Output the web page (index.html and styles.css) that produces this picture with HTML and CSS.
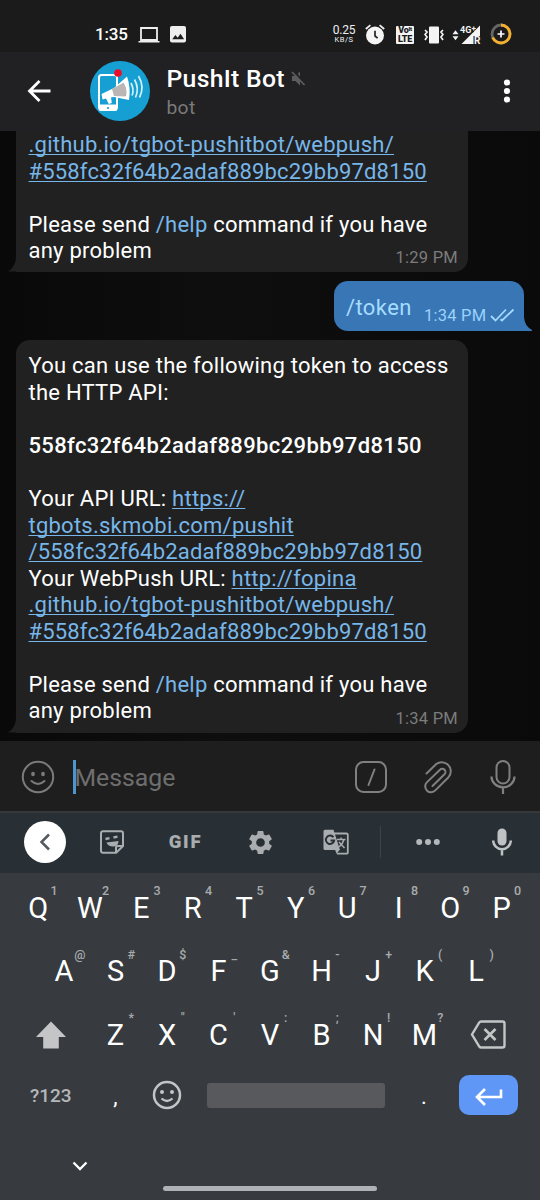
FILE: index.html
```html
<!DOCTYPE html>
<html lang="en">
<head>
<meta charset="utf-8">
<title>PushIt Bot</title>
<link rel="stylesheet" href="styles.css">
</head>
<body>
<div class="phone">
  <div class="status">
    <span class="clock">1:35</span>
    <svg class="laptop" width="22" height="18" viewBox="0 0 22 18"><path d="M3 2h16v12H3z" fill="none" stroke="#eee" stroke-width="1.8"/><path d="M.5 15h21v1.600H.5zM8 14h6v1.500H8z" fill="#eee"/></svg>
    <svg class="photo" width="16" height="17" viewBox="0 0 16 17"><rect width="16" height="16.500" rx="2" fill="#eee"/><path d="M2.200 13.300l3.200-4.200 2.300 2.600 2.800-3.900 3.600 5.500z" fill="#1c1c1c"/></svg>
    <div class="speed"><span class="speed-num">0.25</span><span class="speed-unit">KB/S</span></div>
    <svg class="alarm" width="20" height="21" viewBox="0 0 20 21"><circle cx="10" cy="11.500" r="9" fill="#f4f4f4"/><path d="M10 6.800v5.200l2.600 2.200" fill="none" stroke="#222" stroke-width="1.700"/><path d="M.8 5L5.400 1.200M19.200 5L14.600 1.200" stroke="#f4f4f4" stroke-width="1.700"/></svg>
    <div class="volte"><span>Vo<small>lt</small></span><span>LTE</span></div>
    <svg class="vibrate" width="20" height="18" viewBox="0 0 20 18"><rect x="5" y=".5" width="10" height="17" rx="1" fill="#f4f4f4"/><path d="M1 4l2 2-2 2.500 2 2.500-2 3M19 4l-2 2 2 2.500-2 2.500 2 3" fill="none" stroke="#f4f4f4" stroke-width="1.700"/></svg>
    <svg class="signal" width="30" height="22" viewBox="0 0 30 22"><path d="M.5 10.200l3-4 3 4zM.5 12.200l3 4 3-4z" fill="#f4f4f4"/><path d="M9.500 20L28 1.500V12h-6.500v8z" fill="#f4f4f4"/><path d="M8 1h10l4 2v5l-6 1.500H8z" fill="#1b1b1b"/><text x="8" y="8.600" class="net">4G</text><text x="19.500" y="6.500" class="plus">+</text><text x="22" y="20.300" class="roam">R</text></svg>
    <svg class="battery" width="22" height="22" viewBox="0 0 22 22"><circle cx="11" cy="11" r="9" fill="none" stroke="#666" stroke-width="2.800"/><path d="M11 2a9 9 0 1 1-8.300 12.500" fill="none" stroke="#f5b02b" stroke-width="2.800"/><path d="M11 7.500v7M7.500 11h7" stroke="#fff" stroke-width="1.700"/></svg>
  </div>

  <div class="header">
    <svg class="back" width="24" height="22" viewBox="0 0 24 22"><path d="M12.500 1L2.500 11l10 10M2.500 11h21" fill="none" stroke="#fff" stroke-width="2.800"/></svg>
    <svg class="avatar" width="60" height="60" viewBox="0 0 60 60">
      <circle cx="30" cy="30" r="30" fill="#159fd2"/>
      <rect x="9" y="14" width="18" height="34" rx="2.500" fill="none" stroke="#fff" stroke-width="2"/>
      <path d="M8.500 43.500h19V48a2 2 0 0 1-2 2h-15a2 2 0 0 1-2-2z" fill="#fff"/><circle cx="18" cy="47" r="1.100" fill="#159fd2"/>
      <path d="M11.500 33L24 27 37 15.500q4 11 2 23.500L24 36l-3 .5.800 5.500-3 1-2.800-5.500-3.500 1z" fill="#fff"/>
      <path d="M22 28l11-6q3.500 6 2.500 13.500L24 35z" fill="#bbb5b5"/><path d="M33 22q4 5 2.500 13" stroke="#aaa" fill="none"/>
      <path d="M41 22q3.500 7 1 12.500M44.500 18.500q5 9 1 18M48.500 15q6.500 11 1 21.500" stroke="#d5f1fb" stroke-width="1.700" fill="none"/>
      <circle cx="28" cy="12" r="3.800" fill="#f00b27"/>
    </svg>
    <div class="who"><div class="name">PushIt Bot<svg width="15" height="17" viewBox="0 0 15 17"><path d="M1 6h3.500L9 1.500v14L4.500 11H1z" fill="#5c5c5c"/><path d="M2.500 1L14.500 14" stroke="#212123" stroke-width="2"/><path d="M1 2L13.500 15" stroke="#5c5c5c" stroke-width="1.800"/></svg></div><div class="sub">bot</div></div>
    <svg class="more" width="8" height="24" viewBox="0 0 8 24"><g fill="#fff"><circle cx="4" cy="3.500" r="3.100"/><circle cx="4" cy="12" r="3.100"/><circle cx="4" cy="20.500" r="3.100"/></g></svg>
  </div>

  <div class="chat">
    <div class="bubble in">
      <a>.github.io/tgbot-pushitbot/webpush/</a><br><a class="hash">#558fc32f64b2adaf889bc29bb97d8150</a><br><br>Please send <i>/help</i> command if you have<br>any problem
      <span class="time">1:29 PM</span>
      <svg class="tail" width="16" height="18" viewBox="0 0 16 18"><path d="M8 0v2Q8 13 0 17.500h16V0z" fill="#212121"/></svg>
    </div>
    <div class="bubble out">
      <span class="cmd">/token</span><span class="sent">1:34 PM</span>
      <svg class="checks" width="25" height="14" viewBox="0 0 25 14"><path d="M1 8l4.500 4.500L16 1.500M10.500 11.200l1.500 1.300L23.500 1.500" fill="none" stroke="#a5d8ff" stroke-width="1.800"/></svg>
      <svg class="tail" width="16" height="18" viewBox="0 0 16 18"><path d="M8 0v4Q8.500 13 16 17v1H0V0z" fill="#3876b5"/></svg>
    </div>
    <div class="bubble in">
      You can use the following token to access<br>the HTTP API:<br><br><b>558fc32f64b2adaf889bc29bb97d8150</b><br><br>Your API URL: <a>https://</a><br><a>tgbots.skmobi.com/pushit</a><br><a class="hash">/558fc32f64b2adaf889bc29bb97d8150</a><br>Your WebPush URL: <a>http://fopina</a><br><a>.github.io/tgbot-pushitbot/webpush/</a><br><a class="hash">#558fc32f64b2adaf889bc29bb97d8150</a><br><br>Please send <i>/help</i> command if you have<br>any problem
      <span class="time">1:34 PM</span>
      <svg class="tail" width="16" height="18" viewBox="0 0 16 18"><path d="M8 0v2Q8 13 0 17.500h16V0z" fill="#212121"/></svg>
    </div>
  </div>

  <div class="composer">
    <svg class="smile" width="34" height="34" viewBox="0 0 34 34"><circle cx="17" cy="17" r="15.200" fill="none" stroke="#7b7b7b" stroke-width="2"/><ellipse cx="12" cy="14" rx="1.900" ry="2.300" fill="#7b7b7b"/><ellipse cx="22" cy="14" rx="1.900" ry="2.300" fill="#7b7b7b"/><path d="M10.500 21q6.500 6 13 0" fill="none" stroke="#7b7b7b" stroke-width="2" stroke-linecap="round"/></svg>
    <div class="field">Message</div>
    <svg class="slash" width="34" height="34" viewBox="0 0 34 34"><rect x="2" y="2" width="30" height="30" rx="7.500" fill="none" stroke="#808080" stroke-width="2"/><path d="M20.500 9.500l-6 15.500" stroke="#808080" stroke-width="2" stroke-linecap="round"/></svg>
    <svg class="clip" width="30" height="34" viewBox="0 0 30 34"><path d="M3.500 13.500L12 5.200a9 9 0 0 1 13.500 12L12.300 30.400a5.700 5.700 0 0 1-8.500-8L17 9.700a3.200 3.200 0 0 1 4.500 4.600L9.500 26" fill="none" stroke="#808080" stroke-width="2" stroke-linecap="round"/></svg>
    <svg class="mic" width="26" height="36" viewBox="0 0 26 36"><rect x="6.500" y="2" width="13" height="22.500" rx="6.500" fill="none" stroke="#808080" stroke-width="2"/><path d="M1.500 17.500a11.500 10.800 0 0 0 23 0M13 28.500V35" fill="none" stroke="#808080" stroke-width="2.200"/></svg>
  </div>

  <div class="tools">
    <div class="tool"><div class="collapse"><svg width="12" height="18" viewBox="0 0 12 18"><path d="M10 1.500L2.500 9l7.500 7.500" fill="none" stroke="#555a5e" stroke-width="2.500"/></svg></div></div>
    <div class="tool"><svg width="24" height="24" viewBox="0 0 24 24"><path d="M3 1.200h18a2 2 0 0 1 2 2V16l-6.800 6.800H3a2 2 0 0 1-2-2v-17.600a2 2 0 0 1 2-2zM23 16h-5a2 2 0 0 0-2 2v4.800" fill="none" stroke="#a9adb0" stroke-width="2"/><path d="M6.500 12.500l12-1.500q0 5.500-5.500 5.500-5 0-6.500-4z" fill="#a9adb0"/><path d="M5.500 9l4-.8M13.500 7.500l4-.8" stroke="#a9adb0" stroke-width="2.300"/></svg></div>
    <div class="tool gif">GIF</div>
    <div class="tool gear"><svg width="29" height="29" viewBox="0 0 24 24"><path fill="#a9adb0" d="M19.140 12.940c.04-.3.060-.61.060-.94s-.02-.64-.07-.94l2.030-1.580a.49.49 0 0 0 .12-.61l-1.920-3.320a.49.49 0 0 0-.59-.22l-2.390.96a7 7 0 0 0-1.620-.94l-.36-2.540A.48.48 0 0 0 13.920 2.400h-3.840a.48.48 0 0 0-.47.410l-.36 2.540a7 7 0 0 0-1.620.94l-2.390-.96a.48.48 0 0 0-.59.22L2.740 8.870a.48.48 0 0 0 .12.610l2.030 1.580a6 6 0 0 0 0 1.880l-2.030 1.580a.49.49 0 0 0-.12.610l1.920 3.320c.12.220.37.290.59.220l2.390-.96c.5.380 1.030.700 1.620.94l.36 2.540c.05.240.24.410.48.410h3.840c.24 0 .44-.170.47-.410l.36-2.540a7 7 0 0 0 1.620-.94l2.390.96c.22.080.47 0 .59-.220l1.920-3.320a.48.48 0 0 0-.12-.610zM12 15.600A3.600 3.600 0 1 1 12 8.400a3.600 3.600 0 0 1 0 7.200z"/></svg></div>
    <div class="tool"><svg width="26" height="26" viewBox="0 0 26 26"><path d="M10 4.500h13.500a1.300 1.300 0 0 1 1.300 1.300v17.600a1.300 1.300 0 0 1-1.300 1.300H14" fill="none" stroke="#a9adb0" stroke-width="1.800"/><path d="M2 .8h8.500L17 21H2a1.500 1.500 0 0 1-1.500-1.500V2.300A1.500 1.500 0 0 1 2 .8zM12 20.500h5l-3.500 4.200z" fill="#a9adb0"/><path d="M10.500 8.300A4.200 4.200 0 1 0 11.200 11.500H7.500" fill="none" stroke="#293035" stroke-width="1.900"/><path d="M14 10.500h8.500M18 8.500v2M21 10.500q-1 4-5 7.500M16 13l5.500 6" fill="none" stroke="#a9adb0" stroke-width="1.500"/></svg></div>
    <div class="tool"><div class="divider"></div></div>
    <div class="tool"><svg width="24" height="8" viewBox="0 0 24 8"><g fill="#b4b8bb"><circle cx="3.200" cy="4" r="3"/><circle cx="12" cy="4" r="3"/><circle cx="20.800" cy="4" r="3"/></g></svg></div>
    <div class="tool"><svg width="20" height="28" viewBox="0 0 20 28"><rect x="5.500" y=".5" width="9" height="17" rx="4.500" fill="#bfc2c4"/><path d="M1.200 12.500a8.800 8.800 0 0 0 17.600 0M10 21.500V27.500" fill="none" stroke="#bfc2c4" stroke-width="2.500"/></svg></div>
  </div>

  <div class="keyboard">
    <div class="row">
      <div class="key">Q<sup>1</sup></div><div class="key">W<sup>2</sup></div><div class="key">E<sup>3</sup></div><div class="key">R<sup>4</sup></div><div class="key">T<sup>5</sup></div><div class="key">Y<sup>6</sup></div><div class="key">U<sup>7</sup></div><div class="key">I<sup>8</sup></div><div class="key">O<sup>9</sup></div><div class="key">P<sup>0</sup></div>
    </div>
    <div class="row">
      <div class="key">A<sup>@</sup></div><div class="key">S<sup>#</sup></div><div class="key">D<sup>$</sup></div><div class="key">F<sup>_</sup></div><div class="key">G<sup>&amp;</sup></div><div class="key">H<sup>-</sup></div><div class="key">J<sup>+</sup></div><div class="key">K<sup>(</sup></div><div class="key">L<sup>)</sup></div>
    </div>
    <div class="row">
      <div class="wide"><svg width="30" height="28" viewBox="0 0 30 28"><path d="M15 .5L30 16h-7.200v11.500H7.200V16H0z" fill="#c3c5c6"/></svg></div>
      <div class="key">Z<sup>*</sup></div><div class="key">X<sup>"</sup></div><div class="key">C<sup>'</sup></div><div class="key">V<sup>:</sup></div><div class="key">B<sup>;</sup></div><div class="key">N<sup>!</sup></div><div class="key">M<sup>?</sup></div>
      <div class="wide"><svg width="36" height="29" viewBox="0 0 36 29"><path d="M11 1.500h21.500a2 2 0 0 1 2 2v22a2 2 0 0 1-2 2H11q-1 0-1.700-1L2 14.500l7.300-12q.7-1 1.700-1z" fill="none" stroke="#c3c5c6" stroke-width="2.400"/><path d="M14.500 9l11 11M25.500 9l-11 11" stroke="#c3c5c6" stroke-width="2.600"/></svg></div>
    </div>
    <div class="bottom">
      <div class="sym">?123</div>
      <div class="punct">,</div>
      <div class="emoji"><svg width="30" height="30" viewBox="0 0 30 30"><circle cx="15" cy="15" r="13" fill="none" stroke="#c3c5c6" stroke-width="2.500"/><circle cx="10" cy="12" r="2" fill="#c3c5c6"/><circle cx="20" cy="12" r="2" fill="#c3c5c6"/><path d="M9.500 18.500q5.500 5 11 0" fill="none" stroke="#c3c5c6" stroke-width="2.200"/></svg></div>
      <div class="space"></div>
      <div class="punct">.</div>
      <div class="enter"><svg width="28" height="18" viewBox="0 0 28 18"><path d="M10 1L2 9l8 8M2 9h24V1.500" fill="none" stroke="#fff" stroke-width="2.600"/></svg></div>
    </div>
    <svg class="hide" width="16" height="10" viewBox="0 0 16 10"><path d="M1.500 1.500L8 8l6.500-6.500" fill="none" stroke="#fff" stroke-width="2.300"/></svg>
    <div class="home"></div>
  </div>
</div>
</body>
</html>
```
FILE: styles.css
```css
* { box-sizing: border-box; }
body { margin: 0; background: #000; font-family: Roboto, "Liberation Sans", sans-serif; color: #fff; }
svg { display: block; flex: none; }
.phone { width: 540px; height: 1200px; display: flex; flex-direction: column; overflow: hidden; }

.status { height: 52px; flex: none; background: #1b1b1b; display: flex; align-items: center; padding: 17px 0 0 95px; }
.clock { width: 43px; font-size: 17px; font-weight: 500; line-height: 20px; letter-spacing: -.2px; white-space: nowrap; margin-top: -2px; }
.photo { margin-left: 10px; margin-top: -1px; }
.speed { margin-left: 146px; width: 24px; display: flex; flex-direction: column; align-items: center; color: #eee; }
.speed-num { font-size: 12px; line-height: 12px; height: 11px; margin-top: -2px; letter-spacing: -.2px; }
.speed-unit { font-size: 7.5px; line-height: 9px; letter-spacing: .5px; }
.alarm { margin-left: 9px; margin-top: -1px; }
.volte { margin-left: 11px; width: 18px; height: 18px; border-radius: 1px; background: #f4f4f4; color: #1b1b1b; font-size: 9px; font-weight: 900; line-height: 8.5px; letter-spacing: -.2px; display: flex; flex-direction: column; align-items: center; padding-top: .5px; white-space: nowrap; }
.volte small { font-size: 6px; vertical-align: 2px; line-height: 1px; }
.vibrate { margin-left: 10px; }
.signal { margin-left: 8px; }
.battery { margin-left: 8px; margin-top: -1px; }
.net { font-size: 9px; font-weight: 700; fill: #f4f4f4; }
.plus { font-size: 8px; font-weight: 700; fill: #f4f4f4; }
.roam { font-size: 10px; font-weight: 700; fill: #f4f4f4; }

.header { height: 79px; flex: none; background: #212123; display: flex; align-items: center; padding: 0 29.500px 0 27px; }
.back { margin-top: -1px; }
.avatar { margin-left: 39px; margin-top: -1px; }
.who { margin-left: 16.500px; flex: 1; height: 79px; }
.name { display: flex; align-items: center; gap: 6px; margin-top: 12px; font-size: 24.750px; line-height: 29px; font-weight: 500; letter-spacing: .3px; }
.sub { font-size: 19.250px; line-height: 23px; margin-top: 3px; color: #7a7a7a; letter-spacing: .3px; }
.more { margin-top: -1px; }

.chat { height: 610px; flex: none; background: linear-gradient(90deg, #090909, #0e0e0e 40%, #0a0a0a); display: flex; flex-direction: column; justify-content: flex-end; gap: 9px; padding: 0 0 8.500px 16px; overflow: hidden; }
.bubble { position: relative; flex: none; font-size: 22px; line-height: 26.550px; letter-spacing: .24px; white-space: nowrap; }
.bubble a { color: #77b6e9; text-decoration: underline; text-decoration-thickness: 1.300px; text-underline-offset: 2px; text-decoration-skip-ink: none; }
.bubble .hash { letter-spacing: .18px; }
.bubble i { font-style: normal; color: #77b6e9; }
.bubble b { font-weight: 500; letter-spacing: .37px; }
.in { width: 452px; background: #212121; border-radius: 14px 14px 14px 0; padding: 13.400px 12.500px 7.600px; }
.time { position: absolute; right: 10px; bottom: 3px; font-size: 16.500px; line-height: 22px; color: #7c7c7c; }
.in .tail { position: absolute; left: -8px; bottom: 0; }
.out { align-self: flex-end; width: 190.500px; height: 49.500px; margin-right: 16px; background: #3876b5; border-radius: 14px 14px 0 14px; padding-left: 12.500px; display: flex; color: #a5dcff; }
.cmd { width: 78px; padding-top: 13.500px; letter-spacing: .4px; }
.sent { width: 66px; padding-top: 21.500px; font-size: 16.500px; color: #9bd2fb; }
.checks { margin-top: 26.500px; }
.out .tail { position: absolute; right: -8px; bottom: 0; }

.composer { height: 70px; flex: none; background: #1e1e1e; display: flex; align-items: center; padding: 2px 24px 0 21px; }
.field { margin-left: 18px; flex: 1; border-left: 3px solid #4f94cf; height: 34px; line-height: 35px; font-size: 24.750px; color: #6e6e6e; text-indent: -1.500px; }
.clip { margin-left: 35px; }
.mic { margin-left: 37px; }

.tools { height: 62px; flex: none; background: #293035; border-top: 2px solid #35393c; display: grid; grid-template-columns: 90px 44px 103px 61px 75px 15px 79px 70px; padding-bottom: 2px; }
.tool { display: flex; align-items: center; justify-content: center; }
.collapse { width: 42px; height: 42px; border-radius: 50%; background: #fff; display: flex; align-items: center; justify-content: center; }
.gif { font-size: 18.500px; font-weight: 900; letter-spacing: 1.700px; color: #a9adb0; }
.gear { padding-right: 14px; }
.divider { width: 1px; height: 32px; background: #3d4448; }

.keyboard { flex: 1; background: #373b3f; padding-top: 2.500px; display: flex; flex-direction: column; }
.row { height: 63.500px; flex: none; display: flex; justify-content: center; }
.key { position: relative; width: 51.500px; text-align: center; font-size: 29px; line-height: 65px; }
.key sup { position: absolute; left: 31.500px; width: 20px; top: 7.500px; font-size: 12.500px; font-weight: 500; line-height: 16px; color: #a8abad; text-align: center; }
.wide { width: 77.250px; display: flex; align-items: center; justify-content: center; padding-top: 1px; }
.wide:last-child { padding-right: 1px; }
.bottom { height: 58px; flex: none; display: flex; align-items: center; padding-left: 30px; }
.sym { width: 66px; font-size: 19px; font-weight: 500; color: #b5b8ba; }
.punct { width: 39px; text-align: center; font-size: 22px; line-height: 26px; padding-top: 4px; }
.emoji { margin-left: 16.500px; }
.space { margin-left: 25px; width: 178px; height: 25px; border-radius: 3px; background: #57595d; }
.space + .punct { margin-left: 20px; }
.enter { margin-left: 15.500px; width: 59px; height: 40px; border-radius: 10px; background: #5e97f6; display: flex; align-items: center; justify-content: center; padding-top: 3px; }
.hide { margin: 37px 0 0 72px; }
.home { width: 214px; height: 5px; margin: 15px 0 0 163px; border-radius: 3px; background: #aeb2b4; }
```
